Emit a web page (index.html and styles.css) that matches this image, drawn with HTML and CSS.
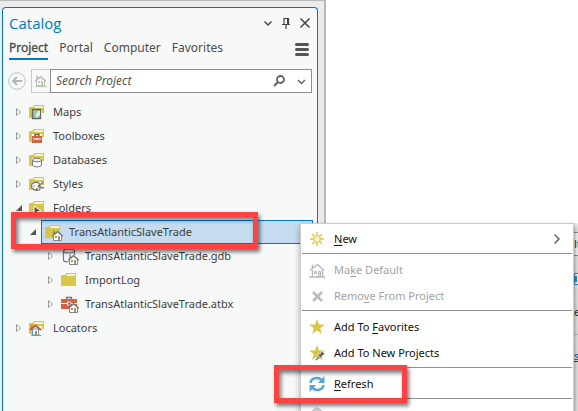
FILE: index.html
```html
<!DOCTYPE html>
<html lang="en">
<head>
<meta charset="utf-8">
<title>Catalog</title>
<link rel="stylesheet" href="styles.css">
</head>
<body>
<svg class="defs" aria-hidden="true">
  <symbol id="folder" viewBox="0 0 16 16"><path d="M0 14V3h4l1-2h10v13z" fill="#d9c648"/><path d="M1 4h4l1-2h8v2z" fill="#f8f3cf"/></symbol>
  <symbol id="folder-cut" viewBox="0 0 16 16"><path d="M0 14V3h4l1-2h10v8h-2V6H3v8z" fill="#d9c648"/><path d="M1 4h4l1-2h8v2z" fill="#f8f3cf"/></symbol>
  <symbol id="house" viewBox="0 0 11 11"><path d="M1.500 5.500 5.500 2l4 3.500v5h-8z" fill="#fff" stroke="#858585"/><path d="M2 4V.5M0 6.200l5.500-4.700L11 6.200" fill="none" stroke="#707070" stroke-width="1.200"/><path d="M3 6h2v2H3zM6 6h2v4H6z" fill="#b9905f"/></symbol>
  <symbol id="open" viewBox="0 0 8 8"><path d="M7 1v6H1z" fill="#555"/></symbol>
  <symbol id="closed" viewBox="0 0 8 10"><path d="M1.500 1.500v7L5.500 5z" fill="#fff" stroke="#999"/></symbol>
</svg>

<main class="dock">
  <section class="panel">
    <header class="title">
      <h1>Catalog</h1>
      <button aria-label="Options"><svg width="10" height="10"><path d="M1.500 3.500 5 7l3.500-3.500" fill="none" stroke="#444" stroke-width="1.500"/></svg></button>
      <button aria-label="Pin"><svg width="10" height="12"><path d="M3 7V1.500h4.500V7M1 7.500h8M5 8v4" fill="none" stroke="#444" stroke-width="1.200"/><path d="M6 1h2v6H6z" fill="#444"/></svg></button>
      <button aria-label="Close"><svg width="12" height="12"><path d="m1.500 1.500 9 9m0-9-9 9" stroke="#444" stroke-width="1.500"/></svg></button>
    </header>
    <nav class="tabs">
      <a class="current" href="#">Project</a><a href="#">Portal</a><a href="#">Computer</a><a href="#">Favorites</a>
      <button aria-label="Menu"><svg width="14" height="13"><path d="M1.500 1.500h11M1.500 6.500h11M1.500 11.500h11" stroke="#555" stroke-width="3" stroke-linecap="round"/></svg></button>
    </nav>
    <div class="search">
      <button class="back" aria-label="Back"><svg width="18" height="18"><circle cx="9" cy="9" r="8.300" fill="none" stroke="#c0c0c0"/><path d="M14 9H5m4-4L5 9l4 4" fill="none" stroke="#b4b4b4" stroke-width="1.800"/></svg></button>
      <button class="home" aria-label="Home"><svg width="12" height="12" viewBox="0 0 12 12" opacity=".5"><use href="#house" width="11" height="11"/><path d="M0 11.500h12" stroke="#6aba5a"/></svg></button>
      <div class="field">
        <input type="text" aria-label="Search Project" placeholder="Search Project">
        <button aria-label="Search"><svg width="12" height="12"><circle cx="7.500" cy="4.500" r="3.500" fill="none" stroke="#606060" stroke-width="1.800"/><path d="m5 7-4 4" stroke="#606060" stroke-width="2"/></svg></button>
        <button aria-label="Search options"><svg width="9" height="9"><path d="m1 3 3.500 3.500L8 3" fill="none" stroke="#606060" stroke-width="1.400"/></svg></button>
      </div>
    </div>
    <ul class="tree">
      <li class="row"><svg class="arrow"><use href="#closed"/></svg><svg class="icon" viewBox="0 0 16 16"><use href="#folder-cut"/><path d="M3.500 5.500h8v9h-8z" fill="#9fc9a3" stroke="#666" stroke-width="1.300"/><path d="M9 7h2v4l-4 3V11z" fill="#dceff0"/></svg><span>Maps</span></li>
      <li class="row"><svg class="arrow"><use href="#closed"/></svg><svg class="icon" viewBox="0 0 16 16"><use href="#folder-cut"/><path d="M3 6h10v2H3z" fill="#f7f9f9"/><path d="M6 9V6.500h4V9" fill="none" stroke="#666" stroke-width="1.400"/><path d="M3 8h10v7H3z" fill="#cf6347"/><path d="M4 11h8M8 10v2" stroke="#fff"/></svg><span>Toolboxes</span></li>
      <li class="row"><svg class="arrow"><use href="#closed"/></svg><svg class="icon" viewBox="0 0 16 16"><use href="#folder-cut"/><path d="M3.500 8v5c0 2.500 9 2.500 9 0V8" fill="#fff" stroke="#777"/><ellipse cx="8" cy="8" rx="4.500" ry="1.800" fill="#eee" stroke="#777"/></svg><span>Databases</span></li>
      <li class="row"><svg class="arrow"><use href="#closed"/></svg><svg class="icon" viewBox="0 0 16 16"><use href="#folder-cut"/><path d="M2.500 10c0-4 6-5 8-2l-1 2 2 1-1 3c-3 1-8 0-8-4z" fill="#fff" stroke="#777" stroke-width="1.200"/><path d="m9 11 5-5m-4 5 5 1" stroke="#777" stroke-width="1.300"/><path d="M4 10h2" stroke="#5a9bc5"/><path d="M7 13h2" stroke="#d07040" stroke-width="2"/></svg><span>Styles</span></li>
      <li class="row"><svg class="arrow"><use href="#open"/></svg><svg class="icon" viewBox="0 0 16 16"><use href="#folder"/><path d="M5 6v9l3-3 4-1z" fill="#555" stroke="#fff"/></svg><span>Folders</span></li>
      <li class="row level2"><svg class="arrow"><use href="#open"/></svg><div class="selected"><svg class="icon" viewBox="0 0 16 16"><use href="#folder"/></svg><svg class="badge"><use href="#house"/></svg><span>TransAtlanticSlaveTrade</span></div></li>
      <li class="row level3"><svg class="arrow"><use href="#closed"/></svg><svg class="icon" viewBox="0 0 16 16"><path d="M2.500 3v9c0 1.500 2 2 5 2M13.500 3v4" fill="none" stroke="#777" stroke-width="1.200"/><ellipse cx="8" cy="3" rx="5.500" ry="2" fill="#fff" stroke="#777" stroke-width="1.200"/></svg><svg class="badge"><use href="#house"/></svg><span>TransAtlanticSlaveTrade.gdb</span></li>
      <li class="row level3"><svg class="arrow"><use href="#closed"/></svg><svg class="icon" viewBox="0 0 16 16"><use href="#folder"/></svg><span>ImportLog</span></li>
      <li class="row level3"><svg class="arrow"><use href="#closed"/></svg><svg class="icon" viewBox="0 0 16 16"><path d="M5.500 4V1.500h5V4" fill="none" stroke="#777" stroke-width="1.300"/><path d="M0 3h16v10H0z" fill="#cf6347"/><path d="M0 7.500h6m4 0h6M6.500 6h3v3h-3z" fill="none" stroke="#fff"/></svg><svg class="badge"><use href="#house"/></svg><span>TransAtlanticSlaveTrade.atbx</span></li>
      <li class="row"><svg class="arrow"><use href="#closed"/></svg><svg class="icon" viewBox="0 0 16 16"><use href="#folder-cut"/><path d="M3.500 9h6v6h-6z" fill="#fff" stroke="#4f9fbf"/><path d="M1 10 6.500 5.500 12 10" fill="none" stroke="#d05b3c" stroke-width="2"/><path d="M3 5v3" stroke="#d05b3c" stroke-width="1.500"/><path d="M6 11h2v4H6z" fill="#c98850"/><path d="M2 15.500h10" stroke="#6fae5b"/></svg><span>Locators</span></li>
    </ul>
  </section>
</main>

<aside class="behind">
  <div class="cell">lt</div>
  <svg class="chip" width="12" height="12"><path d="M.5.5h11v11H.5z" fill="#fff" stroke="#3a93cc"/><path d="M0 3h3v6H0z" fill="#3a93cc"/></svg>
  <div class="letter">e</div>
  <a href="#">s</a>
</aside>

<div class="menu" role="menu">
  <button role="menuitem"><svg viewBox="0 0 16 16"><path d="M8 1v14M1 8h14M3 3l10 10m0-10L3 13" stroke="#d9c648" stroke-width="1.300"/><circle cx="8" cy="8" r="3.500" fill="#f8f0c4" stroke="#d9c648"/></svg><span><u>N</u>ew</span><svg class="more" viewBox="0 0 8 12"><path d="m1.500 1.500 4.500 4.500-4.500 4.500" fill="none" stroke="#666" stroke-width="1.500"/></svg></button>
  <hr>
  <button role="menuitem" disabled><svg viewBox="0 0 16 16"><path d="M3.500 15V8M13.500 15V8M1 8.500 8.500 2.500 15 8.500M3.500 6V2.500M0 15h16" fill="none" stroke="#bbb" stroke-width="1.500"/><path d="M5.500 9.500h2v2h-2zM9.500 9.500h2V15h-2z" fill="#ddd" stroke="#bbb"/></svg><span>Ma<u>k</u>e Default</span></button>
  <button role="menuitem" disabled><svg viewBox="0 0 16 16"><path d="m4 4 9 9m0-9-9 9" stroke="#bbb" stroke-width="2.500"/></svg><span>Remo<u>v</u>e From Project</span></button>
  <hr>
  <button role="menuitem"><svg viewBox="0 0 16 16"><path d="m8 0 2 5.500h6l-4.800 3.700L13 15l-5-3.500L3 15l1.800-5.800L0 5.500h6z" fill="#d9c648"/></svg><span>Add To <u>F</u>avorites</span></button>
  <button role="menuitem"><svg viewBox="0 0 16 16"><path d="m8 0 2 5.500h6l-4.800 3.700L13 15l-5-3.500L3 15l1.800-5.800L0 5.500h6z" fill="#d9c648"/><path d="m7 15 4-4" stroke="#666" stroke-width="1.300"/><path d="m8 9 5 5v-3l3-2-3-3-2 3z" fill="#666" stroke="#fff" stroke-width=".6"/></svg><span>Add To New Projects</span></button>
  <hr>
  <button role="menuitem"><svg viewBox="0 0 16 16"><path d="M1.500 7C2 2 9 .5 12.500 4M14.500 9C14 14 7 15.500 3.500 12" fill="none" stroke="#55a6dc" stroke-width="2.500"/><path d="M15.500 0v7H9zM.5 16V9H7z" fill="#55a6dc"/></svg><span><u>R</u>efresh</span></button>
  <hr>
  <button role="menuitem" disabled><svg viewBox="0 0 16 16"><path d="M3.500 3.500h9v12h-9z" fill="#eee" stroke="#bbb"/><path d="M5 4V2h2V1h2v1h2v2z" fill="#ddd" stroke="#bbb"/></svg><span>Paste</span><kbd>Ctrl+V</kbd></button>
</div>
<div class="mark mark-folder"></div>
<div class="mark mark-refresh"></div>
</body>
</html>
```
FILE: styles.css
```css
* { box-sizing: border-box; }
body {
  margin: 0;
  height: 100vh;
  overflow: hidden;
  position: relative;
  background: #fff;
  color: #3c3c3c;
  font: 11px/16px "Noto Sans", "Open Sans", sans-serif;
}
button { border: 0; padding: 0; background: none; color: inherit; font: inherit; display: flex; align-items: center; justify-content: center; }
svg { display: block; flex: none; }
.defs { position: absolute; width: 0; height: 0; }
.dock {
  width: fit-content;
  min-height: 100vh;
  display: flex;
  padding: 6px 6px 0 2px;
  background: #ebebec;
  border: solid #b9b8bc;
  border-width: 1px 2px 0 0;
}
.panel {
  width: 316px;
  border: 1px solid #0079c1;
  border-bottom: 0;
  border-radius: 4px 4px 0 0;
  background: #f7f9f9;
}
.title { display: flex; align-items: center; gap: 8px; height: 30px; padding: 0 6px 0 6px; }
.title h1 { margin: 0 auto 0 0; font: 400 15px/20px "Open Sans", sans-serif; color: #0079c1; }
.tabs { display: flex; align-items: center; gap: 11px; height: 22px; padding: 0 8px 0 6px; font-size: 12px; }
.tabs a { color: #4c4c4c; text-decoration: none; height: 22px; line-height: 20px; }
.tabs .current { border-bottom: 2px solid #0079c1; -webkit-text-stroke: 0.3px #444; }
.tabs button { margin-left: auto; }
.search { display: flex; align-items: center; padding: 9px 5px 0; }
.back { margin-right: 5px; }
.home { width: 19px; height: 24px; border: 1px solid #c8c8c8; border-right: 0; }
.field { flex: 1; display: flex; align-items: center; gap: 12px; height: 24px; padding: 0 5px; border: 1px solid #8e8e8e; background: #fff; }
.field input { flex: 1; min-width: 0; border: 0; padding: 0; background: none; font: italic 12px/16px "Noto Sans", sans-serif; outline: 0; }
.field input::placeholder { color: #555; opacity: 1; }
.tree { list-style: none; margin: 7px 0 0; padding: 0; }
.row { display: flex; align-items: center; height: 24px; padding-left: 12px; white-space: nowrap; }
.level2 { padding-left: 26px; }
.level3 { padding-left: 44px; }
.arrow { width: 8px; height: 10px; margin-right: 6px; }
.icon { width: 16px; height: 16px; margin-right: 8px; }
.badge { width: 11px; height: 11px; margin: 7px 0 0 -17px; }
.badge + span { margin-left: 6px; }
.level2 .arrow { margin-right: 4px; }
.selected { flex: 1; display: flex; align-items: center; height: 24px; margin-right: 4px; padding-left: 3px; border: 1px solid #0079c1; background: #c5dbef; }
.behind { position: absolute; top: 223px; left: 560px; right: 0; bottom: 0; padding: 9px 0 0 14px; background: #f0f0f0; overflow: hidden; color: #333; }
.cell { height: 24px; margin-left: -14px; padding: 3px 0 0 14px; border: solid #999; border-width: 1px 0; background: #fff; }
.chip { margin-top: 17px; }
.letter { height: 50px; padding-top: 19px; border-bottom: 1px solid #c8c8c8; }
.behind a { display: block; margin-top: 13px; color: #174fa3; }
.menu {
  position: absolute;
  top: 223px;
  left: 300px;
  width: 274px;
  padding: 2px 0;
  border: 1px solid #ccc;
  background: #fff;
  box-shadow: 2px 3px 5px #0005, -2px 3px 6px #0002;
  color: #111;
}
.menu button { width: 100%; height: 26px; padding: 0 12px 0 8px; gap: 9px; justify-content: flex-start; text-align: left; }
.menu button:disabled { color: #a2a2a2; }
.menu button > svg { width: 16px; height: 16px; }
.menu u { text-underline-offset: 2px; }
.menu button > .more { width: 8px; height: 12px; margin-left: auto; }
.menu hr { height: 1px; margin: 1px 1px 3px; border: 0; background: #929292; }
.menu kbd { margin: 0 40px 0 auto; font: inherit; }
.mark { position: absolute; border: 5px solid #ff4343; box-shadow: 2px 3px 4px #0008, inset 2px 3px 4px #0008; }
.mark-folder { left: 11px; top: 212px; width: 247px; height: 37px; }
.mark-refresh { left: 274px; top: 365px; width: 133px; height: 38px; }
```
